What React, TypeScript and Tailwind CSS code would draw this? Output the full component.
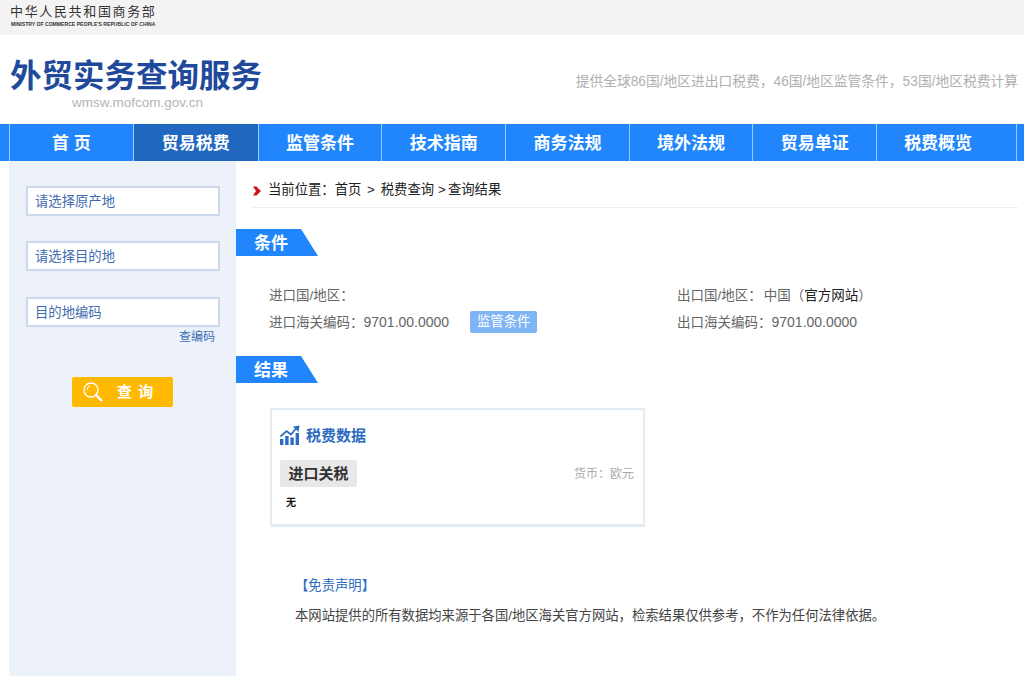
const navItems = ["首 页", "贸易税费", "监管条件", "技术指南", "商务法规", "境外法规", "贸易单证"];

function SectionTag({ label }: { label: string }) {
  return (
    <div className="w-[82px] h-[27px] pl-[18px] bg-[#2186fb] [clip-path:polygon(0_0,65px_0,82px_100%,0_100%)] text-white font-bold text-[17px] leading-[29px]">
      {label}
    </div>
  );
}

function SideInput({ label, className }: { label: string; className: string }) {
  return (
    <div className={`h-[30px] border-2 border-[#ccd9ec] bg-white pl-[7px] text-[13.33px] leading-[28px] text-[#3f6cb0] ${className}`}>
      {label}
    </div>
  );
}

export default function App() {
  return (
    <div className="w-[1024px] h-[676px] overflow-hidden bg-white font-['Liberation_Sans','Noto_Sans_CJK_SC',sans-serif]">
      <div className="h-[35px] bg-[#f3f3f3] pl-[10px] pt-[3px]">
        <div className="text-[13px] leading-[17px] tracking-[1.65px] text-[#333] whitespace-nowrap">中华人民共和国商务部</div>
        <div className="text-[5.1px] leading-[7px] mt-[1px] ml-px font-bold text-[#333] whitespace-nowrap">MINISTRY OF COMMERCE PEOPLE'S REPUBLIC OF CHINA</div>
      </div>

      <div className="h-[89px] flex justify-between pl-[10px] pr-[6px]">
        <div>
          <div className="mt-[21px] text-[31.5px] leading-[40px] font-bold text-[#1f4a9c] whitespace-nowrap">外贸实务查询服务</div>
          <div className="ml-[62px] -mt-px text-[13.5px] leading-[16px] text-[#b5b5b5]">wmsw.mofcom.gov.cn</div>
        </div>
        <div className="mt-[37px] text-[13.75px] leading-[20px] text-[#b0b0b0] whitespace-nowrap">
          提供全球86国/地区进出口税费&#xFF0C;46国/地区监管条件&#xFF0C;53国/地区税费计算
        </div>
      </div>

      <div className="h-[37px] flex bg-[#2186fb] pl-[9px]">
        {navItems.map((item, i) => (
          <div
            key={item}
            className={`border-l border-[#9ccbff] text-center text-white font-bold text-[17px] leading-[39px] ${i === 1 ? "w-[125px] bg-[#2067bf]" : "w-[123.7px]"}`}
          >
            {item}
          </div>
        ))}
        <div className="w-[141px] pr-[17px] border-x border-[#9ccbff] text-center text-white font-bold text-[17px] leading-[39px]">税费概览</div>
      </div>

      <div className="flex h-[515px]">
        <div className="ml-[9px] w-[227px] bg-[#edf2fa] pl-[17px] pr-[16px] pt-[25px]">
          <SideInput label="请选择原产地" className="" />
          <SideInput label="请选择目的地" className="mt-[25px]" />
          <SideInput label="目的地编码" className="mt-[26px]" />
          <div className="text-right pr-[5px] text-[12px] leading-[20px] text-[#3a6fb5]">查编码</div>
          <div className="mt-[30px] ml-[46px] w-[101px] h-[30px] rounded-[2px] bg-[#ffb900] flex items-center pl-[11px] text-white">
            <svg width="20" height="20" viewBox="0 0 20 20" fill="none" stroke="white">
              <circle cx="8" cy="8" r="7" strokeWidth="1.3" />
              <path d="M3.8 8a4.2 4.2 0 0 1 3.4-4" strokeWidth="1" />
              <path d="M13 13l5.5 5.5" strokeWidth="2.4" strokeLinecap="round" />
            </svg>
            <span className="ml-[14px] font-bold text-[15px] tracking-[1px] whitespace-nowrap">查 询</span>
          </div>
        </div>

        <div className="flex-1">
          <div className="ml-[17px] mr-[6px] h-[47px] border-b border-[#eeeeee] flex items-center pt-[12px] text-[13.33px] text-[#222] whitespace-pre">
            <svg width="8" height="10" viewBox="0 0 8 10" className="mr-[7px] mt-[1px]">
              <path d="M0 0.5L3.5 0.5L8 5L3.5 9.5L0 9.5L3 5Z" fill="#d0121b" />
            </svg>
            当前位置&#xFF1A;首页 <span className="ml-[2px]">{">"}</span><span className="ml-[6px]">税费查询</span><span className="ml-[4px]">{">"}</span><span className="ml-[2px]">查询结果</span>
          </div>

          <div className="mt-[21px]">
            <SectionTag label="条件" />
          </div>

          <div className="mt-[27px] ml-[33px] grid grid-cols-[408px_1fr] text-[13.5px] leading-[26px] text-[#666]">
            <div>进口国/地区&#xFF1A;</div>
            <div className="whitespace-nowrap">出口国/地区&#xFF1A;<span className="ml-[2px]">中国</span>&#xFF08;<span className="text-[#222]">官方网站</span>&#xFF09;</div>
            <div className="flex items-center whitespace-nowrap">
              <span>进口海关编码&#xFF1A;<span className="text-[14px]">9701.00.0000</span></span>
              <span className="ml-[21px] -mt-px w-[67px] h-[22px] rounded-[2px] bg-[#7fb5f5] text-center text-white text-[13.33px] leading-[22px]">监管条件</span>
            </div>
            <div className="whitespace-nowrap">出口海关编码&#xFF1A;<span className="text-[14px]">9701.00.0000</span></div>
          </div>

          <div className="mt-[20px]">
            <SectionTag label="结果" />
          </div>

          <div className="mt-[25px] ml-[34px] w-[375px] h-[119px] border-2 border-b-[3px] border-[#e3ebf3] px-[8px] pt-[15px]">
            <div className="flex items-center h-[20px]">
              <svg width="20" height="20" viewBox="0 0 20 20" fill="#2b6bc0">
                <rect x="0" y="14" width="3.4" height="6" />
                <rect x="5.2" y="11" width="3.4" height="9" />
                <rect x="10.4" y="12.5" width="3.4" height="7.5" />
                <rect x="15.6" y="8" width="3.4" height="12" />
                <path d="M0.5 11.5L6.5 6l4.5 3.5L16 3.5" fill="none" stroke="#2b6bc0" strokeWidth="1.7" />
                <path d="M13 1.5L19.5 0.5L18.5 7Z" />
              </svg>
              <span className="ml-[6px] mt-[2px] font-bold text-[15px] text-[#2b6bc0]">税费数据</span>
            </div>
            <div className="mt-[15px] flex items-center justify-between pr-[1px]">
              <span className="w-[77px] h-[27px] rounded-[2px] bg-[#e8e8e8] text-center font-bold text-[15px] leading-[27px] text-[#333]">进口关税</span>
              <span className="text-[12px] text-[#aaaaaa]">货币&#xFF1A;欧元</span>
            </div>
            <div className="mt-[9px] ml-[6px] text-[10px] leading-[14px] font-bold text-[#111]">无</div>
          </div>

          <div className="mt-[49px] ml-[59px] text-[13.33px]">
            <div className="leading-[20px] text-[#2b6bc0]">【免责声明】</div>
            <div className="mt-[10px] leading-[20px] text-[#444] whitespace-nowrap">
              本网站提供的所有数据均来源于各国/地区海关官方网站&#xFF0C;检索结果仅供参考&#xFF0C;不作为任何法律依据。
            </div>
          </div>
        </div>
      </div>
    </div>
  );
}
